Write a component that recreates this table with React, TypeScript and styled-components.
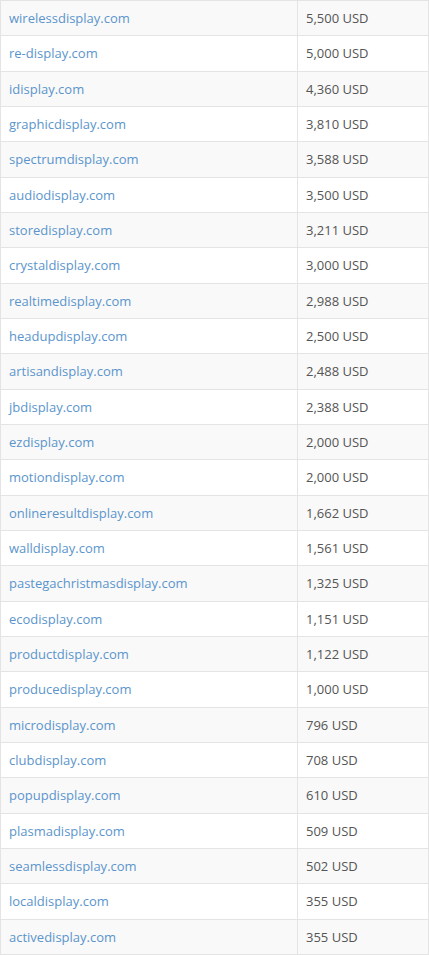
import styled, { createGlobalStyle } from 'styled-components';

const GlobalStyle = createGlobalStyle`
  html, body {
    margin: 0;
    padding: 0;
    background: #ffffff;
  }
  body {
    font-family: "Open Sans", "Liberation Sans", sans-serif;
  }
`;

const Table = styled.table`
  width: 429px;
  border-collapse: collapse;
  table-layout: fixed;
  font-size: 13px;
`;

const Row = styled.tr`
  height: 35.33px;
  &:nth-child(odd) {
    background: #f9f9f9;
  }
`;

const Cell = styled.td`
  border: 1px solid #e4e4e4;
  padding: 0 8px;
  vertical-align: middle;
  color: #555555;
  line-height: 18px;
`;

const DomainCell = styled(Cell)`
  width: 280px;
`;

const DomainLink = styled.a`
  color: #5b95cc;
  text-decoration: none;
`;

const domains: [string, string][] = [
  ['wirelessdisplay.com', '5,500 USD'],
  ['re-display.com', '5,000 USD'],
  ['idisplay.com', '4,360 USD'],
  ['graphicdisplay.com', '3,810 USD'],
  ['spectrumdisplay.com', '3,588 USD'],
  ['audiodisplay.com', '3,500 USD'],
  ['storedisplay.com', '3,211 USD'],
  ['crystaldisplay.com', '3,000 USD'],
  ['realtimedisplay.com', '2,988 USD'],
  ['headupdisplay.com', '2,500 USD'],
  ['artisandisplay.com', '2,488 USD'],
  ['jbdisplay.com', '2,388 USD'],
  ['ezdisplay.com', '2,000 USD'],
  ['motiondisplay.com', '2,000 USD'],
  ['onlineresultdisplay.com', '1,662 USD'],
  ['walldisplay.com', '1,561 USD'],
  ['pastegachristmasdisplay.com', '1,325 USD'],
  ['ecodisplay.com', '1,151 USD'],
  ['productdisplay.com', '1,122 USD'],
  ['producedisplay.com', '1,000 USD'],
  ['microdisplay.com', '796 USD'],
  ['clubdisplay.com', '708 USD'],
  ['popupdisplay.com', '610 USD'],
  ['plasmadisplay.com', '509 USD'],
  ['seamlessdisplay.com', '502 USD'],
  ['localdisplay.com', '355 USD'],
  ['activedisplay.com', '355 USD'],
];

export default function App() {
  return (
    <>
      <GlobalStyle />
      <Table>
        <tbody>
          {domains.map(([name, price]) => (
            <Row key={name}>
              <DomainCell>
                <DomainLink href="#">{name}</DomainLink>
              </DomainCell>
              <Cell>{price}</Cell>
            </Row>
          ))}
        </tbody>
      </Table>
    </>
  );
}
